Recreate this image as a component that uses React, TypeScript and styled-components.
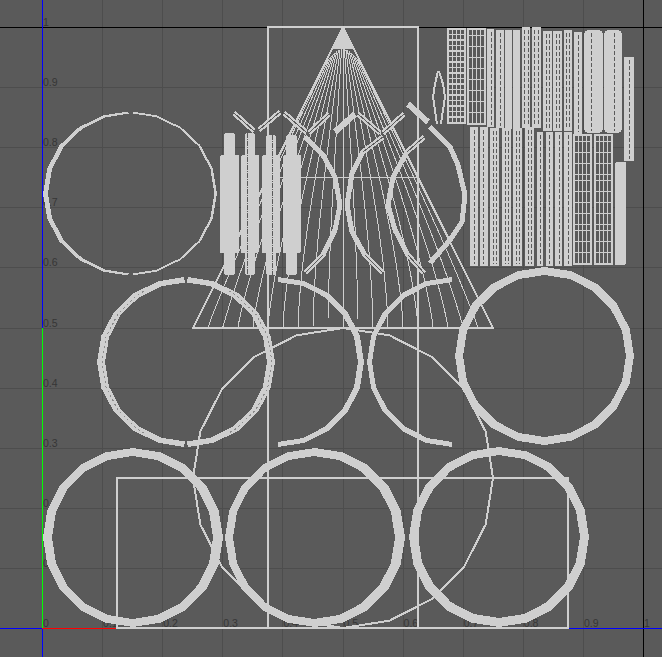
import * as React from "react";
import styled, { createGlobalStyle } from "styled-components";

const BG = "#5a5a5a";
const SHELL = "#cfcfcf";
const ORIGIN_X = 42.5;
const ORIGIN_Y = 628.5;
const UNIT = 60.1;

const GlobalStyle = createGlobalStyle`
  html, body {
    margin: 0;
    padding: 0;
    background: ${BG};
  }
`;

const Viewport = styled.div`
  width: 662px;
  height: 657px;
  overflow: hidden;
  background: ${BG};
`;

const UvCanvas = styled.svg`
  display: block;
  width: 662px;
  height: 657px;
  shape-rendering: crispEdges;
`;

const GridLine = styled.line`
  stroke: #4d4d4d;
  stroke-width: 1;
`;

const AxisLine = styled.line<{ $color: string }>`
  stroke: ${({ $color }) => $color};
  stroke-width: 1;
`;

const AxisLabel = styled.text`
  font-family: "Liberation Sans", Arial, sans-serif;
  font-size: 10.5px;
  fill: #363636;
`;

const Frame = styled.rect`
  fill: none;
  stroke: ${SHELL};
  stroke-width: 2;
`;

const Wire = styled.polyline<{ $width?: number }>`
  fill: none;
  stroke: ${SHELL};
  stroke-width: ${({ $width }) => $width ?? 1};
`;

const Shell = styled.path`
  fill: ${SHELL};
  fill-rule: evenodd;
`;

const MeshDash = styled.polyline`
  fill: none;
  stroke: #8a8a8a;
  stroke-width: 1;
  stroke-dasharray: 2 3;
`;

const Strip = styled.rect`
  fill: ${SHELL};
`;

const Cell = styled.rect`
  fill: ${BG};
`;

const Seam = styled.line<{ $dash?: string }>`
  stroke: ${BG};
  stroke-width: 1;
  stroke-dasharray: ${({ $dash }) => $dash ?? "4 2"};
`;

const Handle = styled.line<{ $width: number }>`
  stroke: ${SHELL};
  stroke-width: ${({ $width }) => $width};
`;

const HandleCore = styled.line`
  stroke: ${BG};
  stroke-width: 1;
`;

type Oval = { cx: number; cy: number; rx: number; ry: number };

// x/y ranges are easier to read off the picture than centre and radius
const oval = (x0: number, x1: number, y0: number, y1: number): Oval => ({
  cx: (x0 + x1) / 2,
  cy: (y0 + y1) / 2,
  rx: (x1 - x0) / 2,
  ry: (y1 - y0) / 2,
});

// 0 deg is the top of the shell, going clockwise
const at = (o: Oval, deg: number) => {
  const a = (deg * Math.PI) / 180;
  return [o.cx + o.rx * Math.sin(a), o.cy - o.ry * Math.cos(a)];
};

const sweep = (from: number, to: number) => {
  const out = [from];
  for (let d = 0; d <= 360; d += 18) {
    if (d > from && d < to) out.push(d);
  }
  out.push(to);
  return out;
};

const loop = (o: Oval, from: number, to: number) =>
  sweep(from, to)
    .map((d) => at(o, d).map((n) => n.toFixed(1)).join(","))
    .join(" ");

const band = (outer: Oval, inner: Oval, from: number, to: number) => {
  const a = sweep(from, to).map((d) => at(outer, d));
  const b = sweep(from, to).map((d) => at(inner, d)).reverse();
  return "M" + [...a, ...b].map((p) => p[0].toFixed(1) + " " + p[1].toFixed(1)).join("L") + "Z";
};

const ring = (outer: Oval, inner: Oval) => band(outer, inner, 0, 360);

// the fan inside the cone, bulging out from the centre on its way down
const fanLine = (t: number) => {
  const pts: string[] = [];
  const top = 49 + 14 * t * t;
  for (let y = top; y < 328; y += 10) {
    const w = (y - 27) / 2;
    const a = 0.28 * (1 - Math.pow((y - 27) / 301, 3));
    pts.push((343 + w * t * (1 + a * (1 - t * t))).toFixed(1) + "," + y.toFixed(1));
  }
  pts.push((343 + 150 * t).toFixed(1) + ",328");
  return pts.join(" ");
};

const FAN = Array.from({ length: 19 }, (_, i) => (i - 9) / 10);

const AXIS_TICKS = ["0.1", "0.2", "0.3", "0.4", "0.5", "0.6", "0.7", "0.8", "0.9", "1"];

const ARCS = [
  "305,137 323,155 335,177 340,205 335,230 323,255 305,273",
  "383,137 363,152 352,173 347,205 352,232 365,255 383,273",
  "424,137 407,152 393,177 388,205 395,230 408,255 424,273",
  "430,127 450,147 458,165 465,195 462,222 450,240 430,263",
];

const LENS = [
  "439,71 443,84 445,97 443,110 441,124",
  "437,124 435,110 433,97 435,84 438,71",
];

const HANDLES: { x1: number; y1: number; x2: number; y2: number; solid?: boolean }[] = [
  { x1: 234, y1: 113, x2: 254, y2: 131 },
  { x1: 259, y1: 130, x2: 280, y2: 112 },
  { x1: 284, y1: 113, x2: 306, y2: 132 },
  { x1: 309, y1: 133, x2: 329, y2: 114 },
  { x1: 335, y1: 132, x2: 355, y2: 114, solid: true },
  { x1: 358, y1: 114, x2: 380, y2: 133 },
  { x1: 383, y1: 133, x2: 404, y2: 114 },
  { x1: 408, y1: 104, x2: 428, y2: 122, solid: true },
  { x1: 305, y1: 273, x2: 323, y2: 255 },
  { x1: 383, y1: 273, x2: 365, y2: 255 },
  { x1: 424, y1: 273, x2: 408, y2: 255 },
  { x1: 424, y1: 137, x2: 407, y2: 152 },
  { x1: 383, y1: 137, x2: 363, y2: 152 },
];

const CAPSULES = [
  { x0: 220, x1: 239, n0: 224, n1: 235, top: 133 },
  { x0: 241, x1: 259, n0: 245, n1: 255, top: 133, seam: 247 },
  { x0: 262, x1: 280, n0: 266, n1: 276, top: 135, seam: 272 },
  { x0: 283, x1: 301, n0: 286, n1: 297, top: 135 },
];

const STRIPS: { x: number; y: number; w: number; h: number; r?: number; seams?: number[] }[] = [
  { x: 487, y: 29, w: 7, h: 98, seams: [491] },
  { x: 496, y: 30, w: 8, h: 98, seams: [500] },
  { x: 505, y: 30, w: 7, h: 99 },
  { x: 513, y: 30, w: 7, h: 99 },
  { x: 522, y: 27, w: 8, h: 101, seams: [524, 528] },
  { x: 532, y: 27, w: 9, h: 101, seams: [534, 538] },
  { x: 543, y: 31, w: 9, h: 100, seams: [546, 549] },
  { x: 553, y: 31, w: 9, h: 100, seams: [556, 559] },
  { x: 564, y: 30, w: 8, h: 101, seams: [566, 569] },
  { x: 574, y: 32, w: 8, h: 102, seams: [578] },
  { x: 584, y: 30, w: 19, h: 103, r: 5, seams: [591] },
  { x: 604, y: 30, w: 18, h: 103, r: 5, seams: [614] },
  { x: 624, y: 57, w: 10, h: 104, seams: [629] },
  { x: 470, y: 127, w: 8, h: 139, seams: [474] },
  { x: 480, y: 127, w: 8, h: 139, seams: [483] },
  { x: 490, y: 128, w: 9, h: 138, seams: [493, 496] },
  { x: 502, y: 128, w: 9, h: 138, seams: [505, 508] },
  { x: 513, y: 128, w: 9, h: 138, seams: [516, 519] },
  { x: 525, y: 127, w: 9, h: 139, seams: [528, 531] },
  { x: 537, y: 132, w: 6, h: 134, seams: [540] },
  { x: 546, y: 132, w: 7, h: 134, seams: [549] },
  { x: 555, y: 132, w: 7, h: 134, seams: [559] },
  { x: 564, y: 132, w: 8, h: 134, seams: [568] },
  { x: 615, y: 162, w: 11, h: 103, r: 2 },
];

const GRIDS = [
  { x: 447, y: 28, h: 96, rows: 17 },
  { x: 467, y: 28, h: 97, rows: 17 },
  { x: 573, y: 134, h: 131, rows: 23 },
  { x: 594, y: 134, h: 131, rows: 23 },
];

function GridStrip({ x, y, h, rows }: { x: number; y: number; h: number; rows: number }) {
  const pitch = (h - 3) / rows;
  return (
    <g>
      <Strip x={x} y={y} width={19} height={h} />
      {Array.from({ length: rows }).map((_, r) =>
        [0, 1, 2, 3].map((c) => (
          <Cell
            key={r + "-" + c}
            x={x + 2 + c * 4}
            y={Math.round(y + 2 + r * pitch)}
            width={3}
            height={Math.round(pitch) - 1}
          />
        ))
      )}
    </g>
  );
}

function Rings() {
  return (
    <g>
      <Shell d={band(oval(43, 217, 111.5, 275.5), oval(48, 214.5, 113.5, 273.5), 1.5, 178.5)} />
      <Shell d={band(oval(43, 217, 111.5, 275.5), oval(48, 214.5, 113.5, 273.5), 181.5, 358.5)} />
      <Shell d={band(oval(97, 275, 277, 447), oval(105, 267, 282.5, 441.5), 1, 179)} />
      <Shell d={band(oval(97, 275, 277, 447), oval(105, 267, 282.5, 441.5), 181, 359)} />
      <MeshDash points={loop(oval(100, 272, 280, 444), 30, 150)} />
      <MeshDash points={loop(oval(102, 270, 280, 444), 210, 330)} />
      <Shell d={band(oval(192, 364, 277, 447), oval(198, 358, 282, 442), 0, 180)} />
      <Shell d={band(oval(367, 537, 277, 447), oval(372, 533, 282, 442), 180, 360)} />
      <Shell d={ring(oval(455, 634, 267, 445), oval(463, 626, 275, 437))} />
      <Shell d={ring(oval(43, 223, 448, 627), oval(52, 213, 456, 619))} />
      <Shell d={ring(oval(225, 405, 448, 627), oval(233, 395, 456, 619))} />
      <Shell d={ring(oval(409, 589, 447, 627), oval(418, 580, 455, 618))} />
    </g>
  );
}

export default function App() {
  return (
    <Viewport>
      <GlobalStyle />
      <UvCanvas viewBox="0 0 662 657">
        {Array.from({ length: 11 }).map((_, i) => (
          <GridLine
            key={"v" + i}
            x1={ORIGIN_X + i * UNIT}
            x2={ORIGIN_X + i * UNIT}
            y1={0}
            y2={657}
          />
        ))}
        {Array.from({ length: 11 }).map((_, i) => (
          <GridLine
            key={"h" + i}
            x1={0}
            x2={662}
            y1={ORIGIN_Y - i * UNIT}
            y2={ORIGIN_Y - i * UNIT}
          />
        ))}

        <AxisLine $color="#000" x1={0} x2={662} y1={27.5} y2={27.5} />
        <AxisLine $color="#000" x1={643.5} x2={643.5} y1={0} y2={657} />
        <AxisLine $color="#0000ff" x1={ORIGIN_X} x2={ORIGIN_X} y1={0} y2={328} />
        <AxisLine $color="#00ff00" x1={ORIGIN_X} x2={ORIGIN_X} y1={328} y2={628} />
        <AxisLine $color="#0000ff" x1={ORIGIN_X} x2={ORIGIN_X} y1={628} y2={657} />
        <AxisLine $color="#0000ff" x1={0} x2={42} y1={ORIGIN_Y} y2={ORIGIN_Y} />
        <AxisLine $color="#ff0000" x1={42} x2={117} y1={ORIGIN_Y} y2={ORIGIN_Y} />
        <AxisLine $color="#0000ff" x1={568} x2={662} y1={ORIGIN_Y} y2={ORIGIN_Y} />

        <AxisLabel x={43} y={627}>0</AxisLabel>
        {AXIS_TICKS.map((t, i) => (
          <AxisLabel key={"x" + t} x={43 + (i + 1) * UNIT} y={627}>{t}</AxisLabel>
        ))}
        {AXIS_TICKS.map((t, i) => (
          <AxisLabel key={"y" + t} x={43} y={627 - (i + 1) * UNIT}>{t}</AxisLabel>
        ))}

        <Frame x={268} y={27} width={150} height={601} />
        <Frame x={117} y={478} width={451} height={150} />

        {/* cone */}
        <Wire $width={2} points="343,27 493,328 193,328 343,27" />
        <Shell d="M343 27L354 49L332 49Z" />
        <Wire points="280,177.5 418,177.5" />
        {FAN.map((t) => (
          <Wire key={t} points={fanLine(t)} />
        ))}

        {/* cap outline */}
        <Wire $width={2} points={loop(oval(193, 493, 328, 628), 0, 360)} />

        <Rings />

        {ARCS.map((points) => (
          <Wire key={points} $width={5} points={points} />
        ))}

        {HANDLES.map((h) => (
          <g key={h.x1 + "-" + h.y1}>
            <Handle $width={h.solid ? 6 : 5} x1={h.x1} y1={h.y1} x2={h.x2} y2={h.y2} />
            {!h.solid && <HandleCore x1={h.x1} y1={h.y1} x2={h.x2} y2={h.y2} />}
          </g>
        ))}

        {CAPSULES.map((c) => (
          <g key={c.x0}>
            <Strip x={c.n0} y={c.top} width={c.n1 - c.n0} height={275 - c.top} rx={3} />
            <Strip x={c.x0} y={155} width={c.x1 - c.x0} height={98} rx={2} />
            {c.seam && <Seam $dash="5 1 1 1" x1={c.seam} x2={c.seam} y1={c.top} y2={275} />}
          </g>
        ))}

        {LENS.map((points) => (
          <Wire key={points} $width={2} points={points} />
        ))}

        {GRIDS.map((g) => (
          <GridStrip key={g.x} {...g} />
        ))}

        {STRIPS.map((s) => (
          <g key={s.x + "-" + s.y}>
            <Strip x={s.x} y={s.y} width={s.w} height={s.h} rx={s.r} />
            {(s.seams ?? []).map((x) => (
              <Seam key={x} x1={x + 0.5} x2={x + 0.5} y1={s.y + 3} y2={s.y + s.h - 2} />
            ))}
          </g>
        ))}
      </UvCanvas>
    </Viewport>
  );
}
